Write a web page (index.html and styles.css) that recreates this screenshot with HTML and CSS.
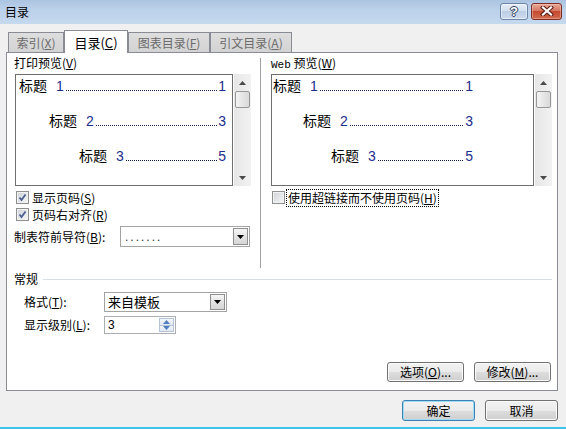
FILE: index.html
```html
<!DOCTYPE html>
<html lang="zh-CN">
<head>
<meta charset="utf-8">
<title>目录</title>
<link rel="stylesheet" href="styles.css">
</head>
<body>
<div class="window">
  <div class="titlebar">
    <span class="title">目录</span>
    <div class="tb-buttons">
      <div class="tb-btn help"><span class="qmark">?</span></div>
      <div class="tb-btn close">
        <svg width="14" height="10" viewBox="0 0 14 10">
          <path d="M3 1.5 L11 8.5 M11 1.5 L3 8.5" stroke="#5a1e14" stroke-width="4.2" stroke-linecap="square" fill="none"/>
          <path d="M3 1.5 L11 8.5 M11 1.5 L3 8.5" stroke="#ffffff" stroke-width="2.2" stroke-linecap="square" fill="none"/>
        </svg>
      </div>
    </div>
  </div>

  <div class="tabs">
    <div class="tab t1">索引(<u>X</u>)</div>
    <div class="tab active">目录(<u>C</u>)</div>
    <div class="tab t3">图表目录(<u>F</u>)</div>
    <div class="tab t4">引文目录(<u>A</u>)</div>
  </div>

  <div class="panel">
    <div class="top">
      <div class="col left">
        <div class="label">打印预览(<u>V</u>)</div>
        <div class="preview-wrap">
          <div class="preview print">
            <div class="toc-row"><span class="h">标题</span><span class="n first">1</span><span class="dots"></span><span class="n">1</span></div>
            <div class="toc-row lv2"><span class="h">标题</span><span class="n first">2</span><span class="dots"></span><span class="n">3</span></div>
            <div class="toc-row lv3"><span class="h">标题</span><span class="n first">3</span><span class="dots"></span><span class="n">5</span></div>
          </div>
          <div class="scrollbar">
            <div class="sb-arrow"><svg width="7" height="4" viewBox="0 0 7 4"><path d="M0 4 L3.5 0 L7 4 Z" fill="#4a4a4a"/></svg></div>
            <div class="sb-thumb"></div>
            <div class="sb-track"></div>
            <div class="sb-arrow"><svg width="7" height="4" viewBox="0 0 7 4"><path d="M0 0 L3.5 4 L7 0 Z" fill="#4a4a4a"/></svg></div>
          </div>
        </div>
        <div class="check-row first">
          <span class="cb"><svg width="11" height="11" viewBox="0 0 11 11"><path d="M2.5 5.5 L4.5 8 L8.5 2.5" stroke="#4a5f92" stroke-width="1.8" fill="none"/></svg></span>
          <span class="cb-text">显示页码(<u>S</u>)</span>
        </div>
        <div class="check-row">
          <span class="cb"><svg width="11" height="11" viewBox="0 0 11 11"><path d="M2.5 5.5 L4.5 8 L8.5 2.5" stroke="#4a5f92" stroke-width="1.8" fill="none"/></svg></span>
          <span class="cb-text">页码右对齐(<u>R</u>)</span>
        </div>
        <div class="leader-row">
          <span class="leader-label">制表符前导符(<u>B</u>):</span>
          <div class="combo leader-combo">
            <span class="combo-text dotted">.......</span>
            <span class="combo-btn"><svg width="7" height="4" viewBox="0 0 7 4"><path d="M0 0 L3.5 4 L7 0 Z" fill="#000"/></svg></span>
          </div>
        </div>
      </div>

      <div class="sep"></div>

      <div class="col right">
        <div class="label"><span class="web">Web</span> 预览(<u>W</u>)</div>
        <div class="preview-wrap">
          <div class="preview web-preview">
            <div class="toc-row"><span class="h">标题</span><span class="n first">1</span><span class="dots"></span><span class="n">1</span></div>
            <div class="toc-row lv2"><span class="h">标题</span><span class="n first">2</span><span class="dots"></span><span class="n">3</span></div>
            <div class="toc-row lv3b"><span class="h">标题</span><span class="n first">3</span><span class="dots"></span><span class="n">5</span></div>
          </div>
          <div class="scrollbar">
            <div class="sb-arrow"><svg width="7" height="4" viewBox="0 0 7 4"><path d="M0 4 L3.5 0 L7 4 Z" fill="#4a4a4a"/></svg></div>
            <div class="sb-thumb"></div>
            <div class="sb-track"></div>
            <div class="sb-arrow"><svg width="7" height="4" viewBox="0 0 7 4"><path d="M0 0 L3.5 4 L7 0 Z" fill="#4a4a4a"/></svg></div>
          </div>
        </div>
        <div class="check-row first hyper">
          <span class="cb empty"></span>
          <span class="cb-text focus">使用超链接而不使用页码(<u>H</u>)</span>
        </div>
      </div>
    </div>

    <div class="group-head">
      <span class="group-title">常规</span>
      <span class="rule"></span>
    </div>

    <div class="form-row fmt-row">
      <span class="form-label">格式(<u>T</u>):</span>
      <div class="combo fmt-combo">
        <span class="combo-text">来自模板</span>
        <span class="combo-btn"><svg width="7" height="4" viewBox="0 0 7 4"><path d="M0 0 L3.5 4 L7 0 Z" fill="#000"/></svg></span>
      </div>
    </div>

    <div class="form-row lvl-row">
      <span class="form-label">显示级别(<u>L</u>):</span>
      <div class="spinner">
        <span class="spin-value">3</span>
        <span class="spin-btns">
          <span class="spin-btn"><svg width="7" height="4" viewBox="0 0 7 4"><path d="M0 4 L3.5 0 L7 4 Z" fill="#4d7fc4"/></svg></span>
          <span class="spin-btn"><svg width="7" height="4" viewBox="0 0 7 4"><path d="M0 0 L3.5 4 L7 0 Z" fill="#4d7fc4"/></svg></span>
        </span>
      </div>
    </div>

    <div class="panel-buttons">
      <button class="btn opt">选项(<u>O</u>)...</button>
      <button class="btn mod">修改(<u>M</u>)...</button>
    </div>
  </div>

  <div class="dialog-buttons">
    <button class="btn default">确定</button>
    <button class="btn">取消</button>
  </div>
  <div class="accent"></div>
</div>
</body>
</html>
```

FILE: styles.css
```css
* { box-sizing: border-box; }

html, body {
  margin: 0;
  padding: 0;
}

body {
  background: #f0f0f0;
  font-family: "Noto Sans CJK SC", "Liberation Sans", sans-serif;
  font-size: 12px;
  line-height: 14px;
  color: #000;
}

u { text-decoration: underline; text-underline-offset: 1px; }

.window {
  width: 566px;
  height: 429px;
  display: flex;
  flex-direction: column;
  overflow: hidden;
}

/* title bar */
.titlebar {
  flex: none;
  height: 24px;
  display: flex;
  align-items: center;
  background: linear-gradient(#abc4e1, #bcd1ea 40%, #c4d8ee);
}
.title {
  margin-left: 5px;
  font-size: 12px;
}
.tb-buttons {
  margin-left: auto;
  margin-right: 4px;
  display: flex;
  gap: 3px;
  margin-top: -2px;
}
.tb-btn {
  height: 17px;
  border-radius: 3px;
  display: flex;
  align-items: center;
  justify-content: center;
}
.help {
  width: 28px;
  border: 1px solid #6c84a5;
  background: linear-gradient(#e6eef8 0%, #d2dfef 45%, #bccde4 50%, #cddcef 100%);
  box-shadow: inset 0 0 0 1px rgba(255,255,255,0.5);
}
.qmark {
  font-family: "Liberation Sans", sans-serif;
  font-weight: bold;
  font-size: 13px;
  line-height: 13px;
  color: #fff;
  text-shadow: 1px 0 0 #2d3e58, -1px 0 0 #2d3e58, 0 1px 0 #2d3e58, 0 -1px 0 #2d3e58;
}
.close {
  width: 31px;
  border: 1px solid #7c2c22;
  background: linear-gradient(#e8a797 0%, #d67862 45%, #c64a32 50%, #d06a4e 100%);
  box-shadow: inset 0 0 0 1px rgba(255,220,210,0.4);
}

/* tabs */
.tabs {
  flex: none;
  margin-top: 6px;
  height: 22px;
  padding-left: 8px;
  display: flex;
  align-items: flex-end;
}
.tab {
  height: 20px;
  border: 1px solid #898c95;
  border-bottom: none;
  background: linear-gradient(#dedede, #d3d3d3);
  color: #6b6b6b;
  display: flex;
  align-items: center;
  justify-content: center;
  padding-top: 1px;
}
.t1 { width: 56px; }
.t3 { width: 82px; }
.t4 { width: 82px; }
.tab.active {
  width: 64px;
  height: 23px;
  background: #fff;
  color: #000;
  margin-bottom: -1px;
  position: relative;
  z-index: 1;
  font-size: 13px;
}

/* panel */
.panel {
  flex: none;
  margin-left: 6px;
  width: 552px;
  height: 339px;
  border: 1px solid #898c95;
  background: #fff;
  padding: 0 5px 8px 7px;
  display: flex;
  flex-direction: column;
}
.top {
  display: flex;
  height: 215px;
  flex: none;
}
.col { padding-top: 3px; }
.left { width: 246px; }
.sep {
  width: 1px;
  height: 210px;
  margin-top: 5px;
  background: #a0a0a0;
}
.right { width: 281px; margin-left: 10px; }

.label { height: 14px; line-height: 14px; }
.web {
  font-family: "Liberation Mono", monospace;
  font-size: 11px;
}

.preview-wrap {
  margin-top: 4px;
  height: 112px;
  display: flex;
}
.preview {
  height: 112px;
  border: 1px solid #6e6e6e;
  background: #fff;
  padding-top: 0;
}
.print {
  width: 218px;
  margin-left: 1px;
  padding-left: 3px;
  padding-right: 6px;
}
.web-preview {
  width: 263px;
  padding-left: 1px;
  padding-right: 60px;
}
.toc-row {
  display: flex;
  align-items: baseline;
  height: 20px;
  line-height: 20px;
  font-size: 14px;
  margin-bottom: 15px;
}
.toc-row.lv2 { padding-left: 30px; }
.toc-row.lv3 { padding-left: 60px; }
.toc-row.lv3b { padding-left: 58px; }
.h { color: #000; }
.n {
  font-family: "Liberation Sans", sans-serif;
  color: #1c2e8c;
}
.n.first { margin-left: 9px; }
.dots {
  flex: 1;
  height: 1px;
  margin: 0 1px 0 2px;
  background: repeating-linear-gradient(to right, #141a4a 0 1px, transparent 1px 2px);
}

.scrollbar {
  width: 17px;
  height: 112px;
  margin-left: 1px;
  background: linear-gradient(to right, #e6e6e6, #f2f2f2);
  display: flex;
  flex-direction: column;
  align-items: center;
}
.sb-arrow {
  width: 17px;
  height: 17px;
  display: flex;
  align-items: center;
  justify-content: center;
}
.sb-thumb {
  width: 15px;
  height: 17px;
  border: 1px solid #979797;
  border-radius: 2px;
  background: linear-gradient(to right, #f4f4f4, #e6e6e6 50%, #d9d9d9);
}
.sb-track { flex: 1; }

/* checkboxes */
.check-row {
  height: 17px;
  display: flex;
  align-items: center;
}
.check-row.first { margin-top: 3px; }
.cb {
  width: 13px;
  height: 13px;
  margin-left: 2px;
  border: 1px solid #8e8f8f;
  background: linear-gradient(135deg, #cfd3d8, #f7f7f7);
  box-shadow: inset 0 0 0 1px #f2f2f2;
  display: flex;
  align-items: center;
  justify-content: center;
}
.cb-text { margin-left: 3px; }
.hyper .cb { margin-left: 1px; }
.hyper .cb-text {
  margin-left: 2px;
  padding: 1px 1px;
  outline: 1px dotted #000;
  outline-offset: 0;
}

/* leader row */
.leader-row {
  margin-top: 3px;
  height: 21px;
  display: flex;
  align-items: center;
}
.leader-label { width: 106px; }
.combo {
  border: 1px solid #a3a3a3;
  background: #fff;
  display: flex;
  align-items: center;
}
.leader-combo { width: 130px; height: 21px; }
.combo-text { padding-left: 4px; }
.combo-text.dotted {
  letter-spacing: 2px;
  color: #333;
  font-family: "Liberation Sans", sans-serif;
}
.combo-btn {
  margin-left: auto;
  margin-right: 1px;
  width: 15px;
  height: 17px;
  border: 1px solid #8f8f8f;
  background: linear-gradient(#f6f6f6, #e3e3e3 50%, #d6d6d6);
  display: flex;
  align-items: center;
  justify-content: center;
}

/* group */
.group-head {
  margin-top: 4px;
  height: 14px;
  display: flex;
  align-items: center;
  flex: none;
}
.rule {
  flex: 1;
  height: 1px;
  margin-left: 5px;
  background: #d5dfe5;
}
.form-row {
  display: flex;
  align-items: center;
  padding-left: 10px;
  flex: none;
}
.fmt-row { margin-top: 6px; height: 20px; }
.lvl-row { margin-top: 4px; height: 18px; }
.form-label { width: 80px; }
.fmt-combo { width: 123px; height: 20px; }
.fmt-combo .combo-text { padding-left: 3px; font-size: 13px; }
.fmt-combo .combo-btn { height: 16px; }
.spinner {
  width: 72px;
  height: 18px;
  border: 1px solid #abadb3;
  background: #fff;
  display: flex;
  align-items: center;
}
.spin-value {
  padding-left: 3px;
  font-family: "Liberation Sans", sans-serif;
}
.spin-btns {
  margin-left: auto;
  margin-right: 1px;
  width: 15px;
  height: 14px;
  display: flex;
  flex-direction: column;
}
.spin-btn {
  flex: 1;
  border: 1px solid #b6c3d6;
  background: linear-gradient(#f4f7fb, #dfe7f2);
  display: flex;
  align-items: center;
  justify-content: center;
}
.spin-btn + .spin-btn { border-top: none; }

/* buttons */
.btn {
  font-family: "Noto Sans CJK SC", "Liberation Sans", sans-serif;
  font-size: 12px;
  line-height: 14px;
  color: #000;
  border: 1px solid #707070;
  border-radius: 3px;
  background: linear-gradient(#f2f2f2 0%, #ebebeb 50%, #dddddd 51%, #cfcfcf 100%);
  box-shadow: inset 0 0 0 1px #fbfbfb;
  padding: 0;
  margin: 0;
}
.panel-buttons {
  margin-top: auto;
  margin-right: 1px;
  display: flex;
  justify-content: flex-end;
  gap: 10px;
}
.panel-buttons .btn { width: 77px; height: 20px; }
.dialog-buttons {
  flex: none;
  margin-top: 9px;
  padding-right: 8px;
  display: flex;
  justify-content: flex-end;
  gap: 10px;
}
.dialog-buttons .btn { width: 73px; height: 21px; }
.btn.default {
  border-color: #3c7fb1;
  box-shadow: inset 0 0 0 1px #9fdcf7;
}
.accent {
  margin-top: auto;
  height: 2px;
  background: #38c6ef;
  flex: none;
}
```
